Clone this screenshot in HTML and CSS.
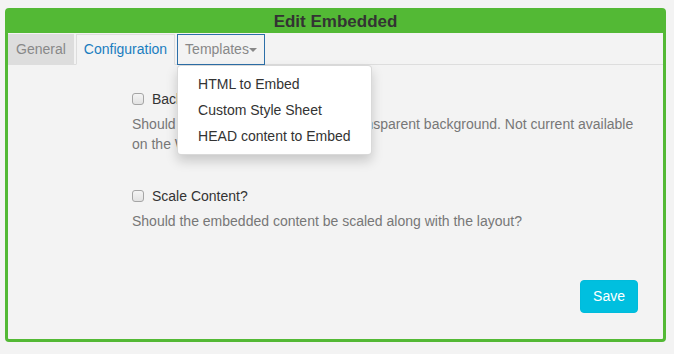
FILE: index.html
```html
<!DOCTYPE html>
<html lang="en">
  <head>
    <meta charset="UTF-8" />
    <meta name="viewport" content="width=device-width, initial-scale=1.0" />
    <title>Edit Embedded</title>
    <link rel="stylesheet" href="styles.css">
  </head>
  <body>
    <div class="panel">
      <div class="panel-title">Edit Embedded</div>
      <ul class="tabs">
        <li class="tab tab-general">General</li>
        <li class="tab tab-active">Configuration</li>
        <li class="tab tab-open">
          Templates<span class="caret"></span>
          <ul class="dropdown">
            <li>HTML to Embed</li>
            <li>Custom Style Sheet</li>
            <li>HEAD content to Embed</li>
          </ul>
        </li>
      </ul>
      <div class="panel-body">
        <div class="field">
          <label class="check"><input type="checkbox" /> Background Transparent?</label>
          <p class="help">Should the embedded content use transparent background. Not current available on the Windows player.</p>
        </div>
        <div class="field">
          <label class="check"><input type="checkbox" /> Scale Content?</label>
          <p class="help">Should the embedded content be scaled along with the layout?</p>
        </div>
      </div>
      <div class="panel-footer">
        <button type="button" class="btn-save">Save</button>
      </div>
    </div>
  </body>
</html>
```

FILE: styles.css
```css
body {
  font-family: "Liberation Sans", Arial, sans-serif;
  font-size: 14px;
  background-color: #f3f3f3;
  color: #333;
  margin: 0;
  padding: 8px 0 0 5px;
}

.panel {
  width: 661px;
  height: 334px;
  box-sizing: border-box;
  border: 3px solid #53b935;
  border-radius: 4px;
  display: flex;
  flex-direction: column;
}

.panel-title {
  background-color: #53b935;
  text-align: center;
  font-weight: bold;
  font-size: 17px;
  line-height: 22px;
  color: #333;
}

.tabs {
  list-style: none;
  margin: 0;
  padding: 1px 0 0;
  display: flex;
  height: 32px;
  box-sizing: border-box;
  border-bottom: 1px solid #ddd;
}

.tab {
  position: relative;
  line-height: 29px;
  padding: 0 7px;
  margin-right: 2px;
  border: 1px solid transparent;
  color: #888;
}

.tab-general {
  background-color: #ddd;
  border-color: #ddd;
}

.tab-active {
  color: #1a7dbf;
  border-color: #ddd #ddd transparent;
  background-color: #f3f3f3;
  height: 31px;
  box-sizing: border-box;
}

.tab-open {
  border-color: #2c6fa8;
  height: 31px;
  box-sizing: border-box;
}

.caret {
  display: inline-block;
  vertical-align: middle;
  border-top: 4px solid #888;
  border-left: 4px solid transparent;
  border-right: 4px solid transparent;
}

.dropdown {
  position: absolute;
  top: 30px;
  left: -1px;
  margin: 0;
  padding: 5px 0;
  list-style: none;
  background: #fff;
  border: 1px solid rgba(0, 0, 0, 0.15);
  border-radius: 4px;
  box-shadow: 0 6px 12px rgba(0, 0, 0, 0.175);
  white-space: nowrap;
  z-index: 10;
}

.dropdown li {
  padding: 3px 20px;
  line-height: 20px;
  color: #333;
}

.panel-body {
  padding: 24px 15px 0 124px;
}

.field {
  margin-bottom: 32px;
}

.check {
  display: block;
  position: relative;
  padding-left: 20px;
  line-height: 20px;
}

.check input {
  appearance: none;
  position: absolute;
  left: 0;
  top: 4px;
  margin: 0;
  width: 12px;
  height: 12px;
  border: 1px solid #a5a5a5;
  border-radius: 3px;
  background: linear-gradient(#f4f4f4, #e2e2e2);
}

.help {
  margin: 5px 0 0;
  line-height: 20px;
  color: #777;
}

.panel-footer {
  margin-top: auto;
  display: flex;
  justify-content: flex-end;
  padding: 0 25px 26px;
}

.btn-save {
  font-family: inherit;
  font-size: 14px;
  line-height: 19px;
  padding: 6px 12px;
  color: #fff;
  background-color: #00bfdf;
  border: 1px solid #00bbdb;
  border-radius: 4px;
  cursor: pointer;
}
```
